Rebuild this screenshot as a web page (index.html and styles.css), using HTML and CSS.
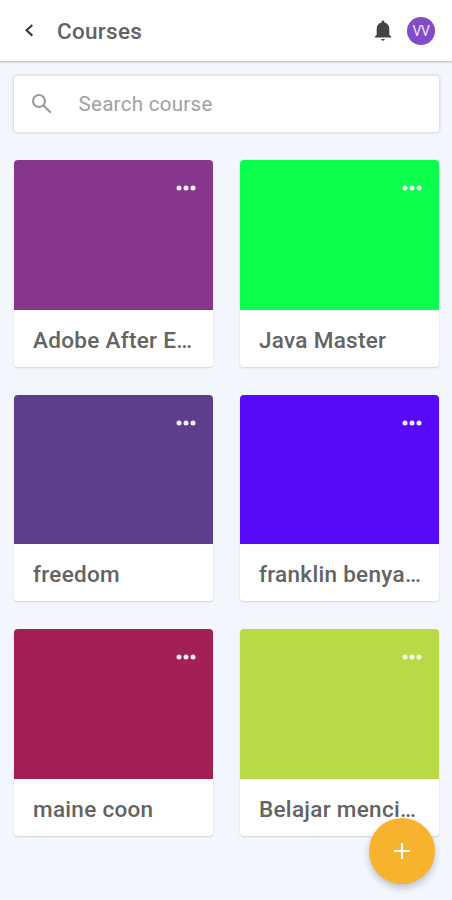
FILE: index.html
```html
<!DOCTYPE html>
<html lang="en">
<head>
<meta charset="utf-8">
<title>Courses</title>
<link rel="stylesheet" href="styles.css">
</head>
<body>
<header class="topbar">
  <svg class="back" viewBox="0 0 12 16"><path d="M9.300 2 3.600 7.300l5.700 5.300"/></svg>
  <h1 class="title">Courses</h1>
  <svg class="bell" viewBox="0 0 18 22"><path d="M9 .5c-.8 0-1.400.6-1.400 1.400v.5C4.500 3.100 2.700 5.600 2.700 8.700v6.100L.8 16.700v.9h16.400v-.9l-1.900-1.900V8.700c0-3.100-1.800-5.600-4.900-6.300v-.5C10.400 1.100 9.800.5 9 .5zM7.200 18.900a1.800 1.800 0 0 0 3.600 0z"/></svg>
  <div class="avatar">VV</div>
</header>
<main class="content">
  <div class="search">
    <svg class="lens" viewBox="0 0 22 22"><circle cx="8" cy="8" r="6"/><path d="m12.500 12.500 7.300 7.300"/></svg>
    <span class="placeholder">Search course</span>
  </div>
  <section class="grid">
    <article class="card"><div class="cover plum"><svg class="more" viewBox="0 0 20 6"><circle cx="3" cy="3" r="2.500"/><circle cx="10" cy="3" r="2.500"/><circle cx="17" cy="3" r="2.500"/></svg></div><h2 class="name">Adobe After E…</h2></article>
    <article class="card"><div class="cover green"><svg class="more" viewBox="0 0 20 6"><circle cx="3" cy="3" r="2.500"/><circle cx="10" cy="3" r="2.500"/><circle cx="17" cy="3" r="2.500"/></svg></div><h2 class="name">Java Master</h2></article>
    <article class="card"><div class="cover violet"><svg class="more" viewBox="0 0 20 6"><circle cx="3" cy="3" r="2.500"/><circle cx="10" cy="3" r="2.500"/><circle cx="17" cy="3" r="2.500"/></svg></div><h2 class="name">freedom</h2></article>
    <article class="card"><div class="cover blue"><svg class="more" viewBox="0 0 20 6"><circle cx="3" cy="3" r="2.500"/><circle cx="10" cy="3" r="2.500"/><circle cx="17" cy="3" r="2.500"/></svg></div><h2 class="name">franklin benya…</h2></article>
    <article class="card"><div class="cover crimson"><svg class="more" viewBox="0 0 20 6"><circle cx="3" cy="3" r="2.500"/><circle cx="10" cy="3" r="2.500"/><circle cx="17" cy="3" r="2.500"/></svg></div><h2 class="name">maine coon</h2></article>
    <article class="card"><div class="cover lime"><svg class="more" viewBox="0 0 20 6"><circle cx="3" cy="3" r="2.500"/><circle cx="10" cy="3" r="2.500"/><circle cx="17" cy="3" r="2.500"/></svg></div><h2 class="name">Belajar menci…</h2></article>
  </section>
</main>
<div class="fab"><svg class="plus" viewBox="0 0 16 16"><path d="M8 0v16M0 8h16"/></svg></div>
</body>
</html>
```
FILE: styles.css
```css
* { box-sizing: border-box; }
body {
  margin: 0;
  height: 900px;
  overflow: hidden;
  background: #f3f6fd;
  font-family: Roboto, "Liberation Sans", sans-serif;
  color: #636363;
}
svg { display: block; flex: none; }
.topbar {
  display: flex;
  align-items: center;
  height: 61px;
  padding: 0 17px 0 23px;
  background: #fff;
  box-shadow: 0 1px 2px rgba(0, 0, 0, .27);
}
.back { width: 12px; height: 16px; fill: none; stroke: #3c3c3c; stroke-width: 2.2; }
.title { flex: 1; margin: 0 0 0 22px; font-size: 22.500px; font-weight: 500; letter-spacing: .3px; }
.bell { width: 18px; height: 22px; fill: #444; margin-right: 15px; }
.avatar {
  width: 28px;
  height: 28px;
  border-radius: 50%;
  background: #824bc8;
  color: #f0e4fc;
  font-size: 14px;
  line-height: 29px;
  letter-spacing: -.5px;
  text-align: center;
}
.content { padding: 15px 13px 0 14px; }
.search {
  display: flex;
  align-items: center;
  height: 56px;
  padding-left: 17px;
  border-radius: 4px;
  background: #fff;
  box-shadow: 0 0 3px 1px rgba(0, 0, 0, .13);
}
.lens { width: 22px; height: 22px; fill: none; stroke: #9b9b9b; stroke-width: 2.1; }
.placeholder { margin-left: 25.500px; font-size: 20.500px; letter-spacing: .3px; color: #a1a1a1; }
.grid {
  display: grid;
  grid-template-columns: 198.500px 198.500px;
  gap: 28px 27.500px;
  margin-top: 28px;
}
.card {
  min-width: 0;
  height: 206.600px;
  border-radius: 4px;
  overflow: hidden;
  background: #fff;
  box-shadow: 0 1px 2px rgba(0, 0, 0, .14);
}
.cover { display: flex; justify-content: flex-end; height: 149.500px; padding: 25px 17px 0 0; }
.more { width: 20px; height: 6px; fill: #fff; opacity: .93; }
.plum { background: #87378b; }
.green { background: #09ff4b; }
.violet { background: #5c3e8d; }
.blue { background: #580bfa; }
.crimson { background: #a32056; }
.lime { background: #b8da45; }
.name {
  margin: 0;
  padding-left: 19px;
  white-space: nowrap;
  font-size: 22.500px;
  font-weight: 500;
  line-height: 60px;
  letter-spacing: .3px;
}
.fab {
  position: absolute;
  left: 369px;
  top: 818px;
  display: flex;
  align-items: center;
  justify-content: center;
  width: 66px;
  height: 66px;
  border-radius: 50%;
  background: #f7b22e;
  box-shadow: 0 4px 7px rgba(0, 0, 0, .22);
}
.plus { width: 16px; height: 16px; stroke: #fff; stroke-width: 2.200; }
```
